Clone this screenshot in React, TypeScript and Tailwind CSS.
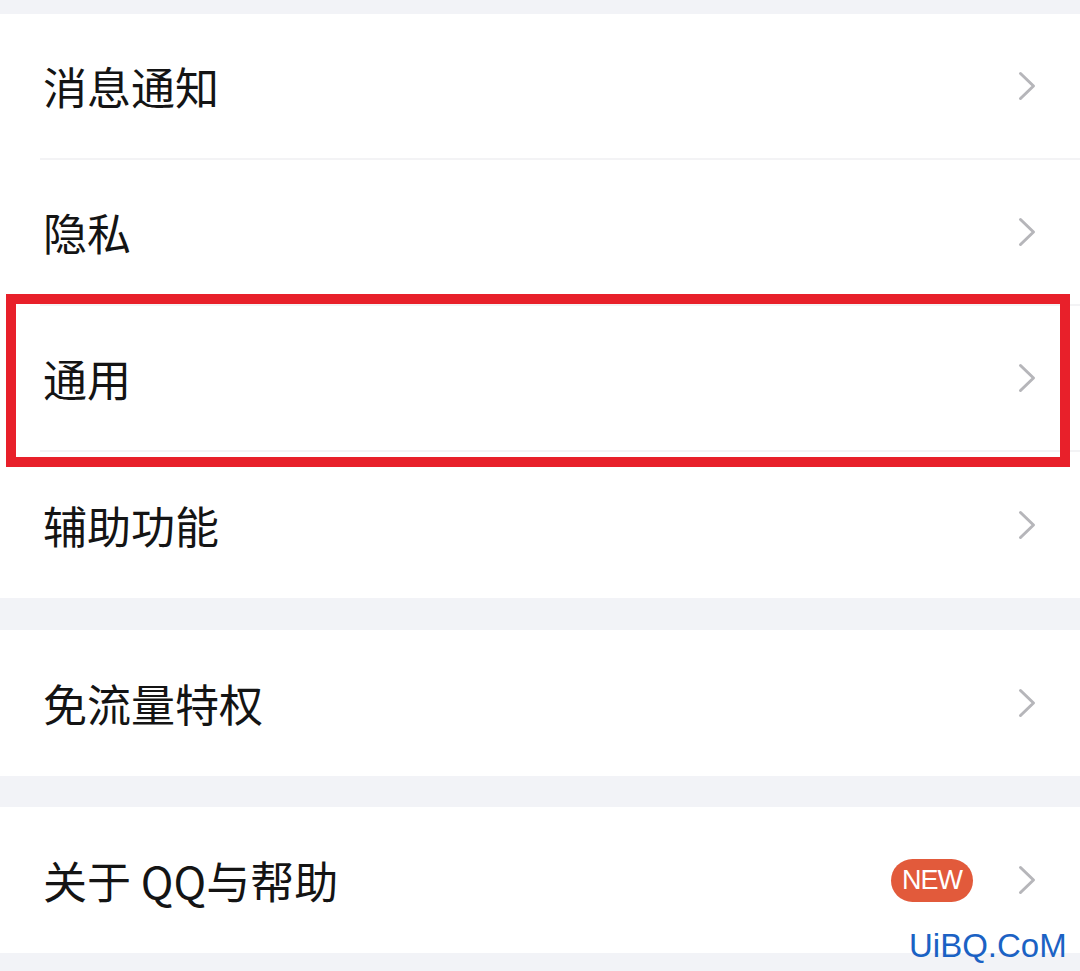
import React from "react";

const Chevron = () => (
  <svg width="18" height="30" viewBox="0 0 18 30" fill="none" className="shrink-0">
    <polyline points="2.5,2.5 15.5,15 2.5,27.5" stroke="#b6b6ba" strokeWidth="3" strokeLinecap="round" strokeLinejoin="round" />
  </svg>
);

type RowProps = { label: string; last?: boolean; badge?: boolean };

const Row = ({ label, last, badge }: RowProps) => (
  <div className="pl-[40px]">
    <div
      className={`h-[146px] flex items-center justify-between pl-[3px] pr-[44px] ${last ? "" : "border-b-2 border-[#f3f3f5]"}`}
    >
      <span className="text-[44px] leading-none text-[#141414]">{label}</span>
      <div className="flex items-center gap-[45px]">
        {badge && (
          <span className="h-[43px] w-[82px] rounded-full bg-[#e25a3b] text-white text-[27px] tracking-[-1px] leading-none flex items-center justify-center font-['Liberation_Sans',Arial,sans-serif] pt-[1px]">
            NEW
          </span>
        )}
        <Chevron />
      </div>
    </div>
  </div>
);

export default function App() {
  return (
    <div className="relative w-[1080px] h-[971px] overflow-hidden bg-[#f2f3f7] font-['Noto_Sans_CJK_SC','Noto_Sans',sans-serif]">
      <div className="pt-[14px] flex flex-col gap-[31px]">
        <div className="bg-white">
          <Row label="消息通知" />
          <Row label="隐私" />
          <Row label="通用" />
          <Row label="辅助功能" last />
        </div>
        <div className="bg-white mt-[1px]">
          <Row label="免流量特权" last />
        </div>
        <div className="bg-white">
          <Row label="关于 QQ与帮助" last badge />
        </div>
      </div>

      {/* highlight annotation */}
      <div className="absolute left-[6px] top-[294px] w-[1064px] h-[173px] border-[10px] border-[#e8202a]" />

      {/* watermark */}
      <span className="absolute left-[909px] top-[929px] text-[33px] leading-none text-[#1b62c4] font-['Liberation_Sans',Arial,sans-serif]">
        UiBQ.CoM
      </span>
    </div>
  );
}
